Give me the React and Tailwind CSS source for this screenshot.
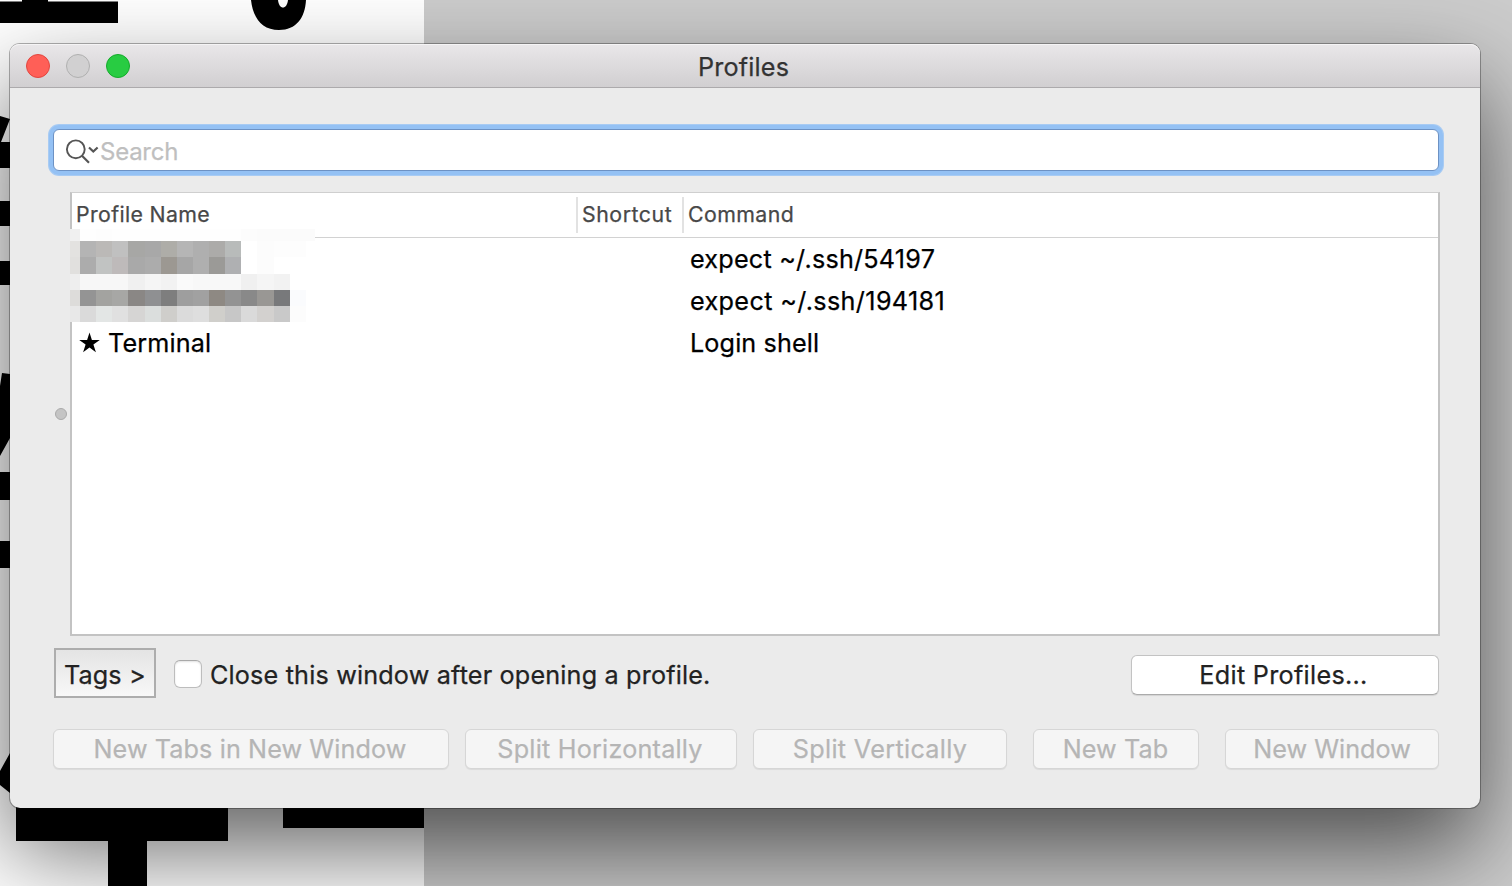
const MOSAIC = [
  ["#f0f0f0", "#fefefe", "#fdfdfd", "#fefefe", "#fefefe", "#fefefe", "#fefefe", "#fefefe", "#fefefe", "#fefefe", "#fefefe", "#fcfcfc", "#fbfbfb", "#fbfbfb", "#fbfbfb", "#fbfbfb"],
  ["#e3e2e0", "#b4b4b4", "#bbb9b7", "#c0c0c0", "#a7a7a5", "#a8a8a8", "#aeada8", "#b5b5b5", "#afafaf", "#acaba9", "#b8bbba", "#ffffff", "#fcfcfc", "#fdfdfd", "#fdfdfd", "#ffffff"],
  ["#e1e0de", "#acacac", "#c1c3c2", "#bebaba", "#a9a9a9", "#acacac", "#9c9892", "#a6a6a6", "#afafaf", "#9b9a97", "#afb0b2", "#ffffff", "#fcfcfc", "#ffffff", "#ffffff", "#ffffff"],
  ["#eeeeee", "#f7f7f7", "#f7f7f7", "#f7f7f7", "#f0f0f0", "#f5f5f5", "#f2f2f2", "#fafafa", "#f8f8f8", "#f8f8f8", "#f8f8f8", "#f0f0f0", "#f5f5f5", "#f2f2f2", "#ffffff", "#ffffff"],
  ["#dddcda", "#949494", "#a3a3a0", "#a7a7a5", "#8a8785", "#8f9092", "#7e7e7e", "#9e9e9e", "#a1a1a1", "#8e8983", "#939393", "#898989", "#999794", "#78797b", "#fafbfd", "#ffffff"],
  ["#e8e8e8", "#dadada", "#e3e6e5", "#e0e0e0", "#d6d5d4", "#dbdedd", "#cfcecb", "#dbdbdb", "#dedede", "#d0cfcb", "#c7c7c7", "#dadada", "#d3d1cf", "#c9c9c9", "#fcfcfc", "#ffffff"],
];

function Backdrop() {
  return (
    <svg className="absolute inset-0" width="1512" height="886" viewBox="0 0 1512 886">
      <rect width="424" height="886" fill="#fff" />
      <path d="M0 1.500h22V0h26v1.500h70V23H0z" />
      <path d="M251 0c2 18 11 30 28 30s26-12 27-30h-18c-1 10-9 10-10 0z" />
      <path d="M0 116l10 3-9 23h9v26H0zM0 201h10v25H0zM0 261h10v24H0zM2 373l8 1v64L0 456v-70zM0 472h10v28H0zM0 541h10v27H0zM10 753v40l-10-8v-14z" />
      <path d="M16 800h212v41h-81v45h-39v-45H16zM283 800h141v28H283z" />
    </svg>
  );
}

/* Pixelated cover over the two private profile names. */
function Mosaic() {
  return (
    <div className="absolute left-[-2px] top-[36px] grid grid-cols-[10px_repeat(14,16.13px)_9px] grid-rows-[12px_16px_17px_16px_16px_16px]">
      {MOSAIC.map((row, r) =>
        row.map((color, c) =>
          c === 15 && r > 0 ? <i key={`${r}-${c}`} /> : <i key={`${r}-${c}`} style={{ backgroundColor: color }} />,
        ),
      )}
    </div>
  );
}

function TitleBar() {
  return (
    <header className="flex h-[44px] items-center rounded-t-[9px] border-b border-[#acaaac] bg-linear-to-b from-[#e9e7e9] to-[#d1cfd1] pl-4 shadow-[inset_0_1px_0_#f5f4f5]">
      <div className="flex flex-1 gap-4">
        <span className="size-6 rounded-full border border-[#e2463f] bg-[#ff5f57]" />
        <span className="size-6 rounded-full border border-[#b0b0b0] bg-[#d1d0d1]" />
        <span className="size-6 rounded-full border border-[#14ab2b] bg-[#28cc42]" />
      </div>
      <h1 className="pt-[3px] text-[25.2px] leading-[40px] tracking-[0.18px] text-[#333333]">Profiles</h1>
      <div className="flex-1 pr-[19px]" />
    </header>
  );
}

function SearchField() {
  return (
    <div className="ml-[43px] flex h-[42px] w-[1386px] items-center rounded-[6px] border border-[#6d92c4] bg-white pl-[11px] shadow-[0_0_0_4px_#94c1f4,0_0_0_5px_#a8cbf3]">
      <svg width="36" height="26" viewBox="0 0 36 26" fill="none" stroke="#555" className="mt-1">
        <circle cx="10.800" cy="10.300" r="8.900" strokeWidth="1.900" />
        <path d="M17 16.700l7 7" strokeWidth="2.200" />
        <path d="M24 8.500l4.300 4 4.300-4" strokeWidth="2.200" />
      </svg>
      <span className="-ml-px pt-1 text-[24px] leading-[36px] tracking-[-0.25px] text-[#bfbfbf]">Search</span>
    </div>
  );
}

function Row({ name, command, tracking }) {
  return (
    <div className="flex h-[42px] items-center text-[25.2px] text-black">
      <div className="flex w-[618px] items-center pl-[7px] tracking-[0.14px]">
        {name && (
          <>
            <svg width="21" height="21" viewBox="0 0 21 21" className="mr-[8px]">
              <path d="M10.500.500l2.400 7.400h7.900l-6.400 4.700 2.500 7.600-6.400-4.700-6.400 4.700 2.500-7.600L.200 7.900h7.900z" />
            </svg>
            <span className="pt-[2px]">{name}</span>
          </>
        )}
      </div>
      <span className={`pt-[2px] ${tracking}`}>{command}</span>
    </div>
  );
}

function ProfileTable() {
  return (
    <div className="relative h-[444px] w-[1370px] border-2 border-t border-[#c3c3c3] border-t-[#cfcfcf] bg-white">
      <div className="flex h-[45px] items-center border-b border-[#d2d2d2] text-[21.3px] text-[#484848]">
        <span className="w-[504px] pl-1 tracking-[0.37px]">Profile Name</span>
        <span className="flex h-9 w-[106px] items-center border-l-2 border-[#e2e2e2] pl-1 tracking-[0.54px]">Shortcut</span>
        <span className="flex h-9 items-center border-l-2 border-[#e2e2e2] pl-1 tracking-[0.42px]">Command</span>
      </div>
      <Row command="expect ~/.ssh/54197" tracking="tracking-[0.22px]" />
      <Row command="expect ~/.ssh/194181" tracking="tracking-[0.36px]" />
      <Row name="Terminal" command="Login shell" tracking="tracking-[0.12px]" />
      <Mosaic />
    </div>
  );
}

function DisabledButton({ className, children }) {
  return (
    <button
      className={`flex h-[40px] items-center justify-center rounded-[6px] border border-[#d6d6d6] bg-[#f5f5f5] pt-[2px] text-[25.2px] whitespace-nowrap text-[#b5b5b5] shadow-[0_1px_1px_rgba(0,0,0,0.07)] ${className}`}
    >
      {children}
    </button>
  );
}

export default function App() {
  return (
    <div className="relative h-[886px] w-[1512px] overflow-hidden bg-[#cccccc] pt-[44px] pl-[10px] font-['Inter',sans-serif] [-webkit-text-stroke:0.25px]">
      <Backdrop />
      <main className="relative h-[764px] w-[1470px] rounded-[10px] bg-[#ebebeb] shadow-[0_42px_96px_rgba(0,0,0,0.62),0_0_0_1px_rgba(0,0,0,0.3)]">
        <TitleBar />
        <div className="pt-[41px]">
          <SearchField />
          <div className="mt-[21px] flex items-center">
            <span className="mr-[3px] ml-[45px] size-3 rounded-full border border-[#aaaaaa] bg-[#c4c4c4]" />
            <ProfileTable />
          </div>
          <div className="mt-3 flex h-[50px] items-center pr-[41px] pl-11 text-[25.2px] text-[#222222]">
            <button className="flex h-[50px] w-[102px] items-center border-2 border-[#adadad] bg-linear-to-b from-[#e4e4e4] to-[#f8f8f8] pt-[5px] pl-[8px] tracking-[0.12px] whitespace-nowrap">
              Tags &gt;
            </button>
            <span className="mt-px ml-[18px] size-7 rounded-[6px] border border-[#bdbdbd] border-t-[#a9a9a9] bg-white shadow-[inset_0_1px_2px_rgba(0,0,0,0.12)]" />
            <span className="mt-[5px] ml-[8px] flex-1 tracking-[0.17px] whitespace-nowrap">Close this window after opening a profile.</span>
            <button className="mt-[3px] flex h-[40px] w-[308px] items-center justify-center rounded-[6px] border border-[#c3c3c3] border-b-[#ababab] bg-white pt-[2px] pr-[3px] tracking-[0.3px] shadow-[0_1px_1px_rgba(0,0,0,0.1)]">
              Edit Profiles...
            </button>
          </div>
          <div className="mt-[31px] flex pl-[43px]">
            <DisabledButton className="w-[396px] pr-[2px] tracking-[0.1px]">New Tabs in New Window</DisabledButton>
            <DisabledButton className="ml-4 w-[272px] pr-[2px] tracking-[0.22px]">Split Horizontally</DisabledButton>
            <DisabledButton className="ml-4 w-[254px] tracking-[0.32px]">Split Vertically</DisabledButton>
            <DisabledButton className="ml-[26px] w-[166px] pr-px tracking-[0.09px]">New Tab</DisabledButton>
            <DisabledButton className="ml-[26px] w-[214px] tracking-[0.02px]">New Window</DisabledButton>
          </div>
        </div>
      </main>
    </div>
  );
}
